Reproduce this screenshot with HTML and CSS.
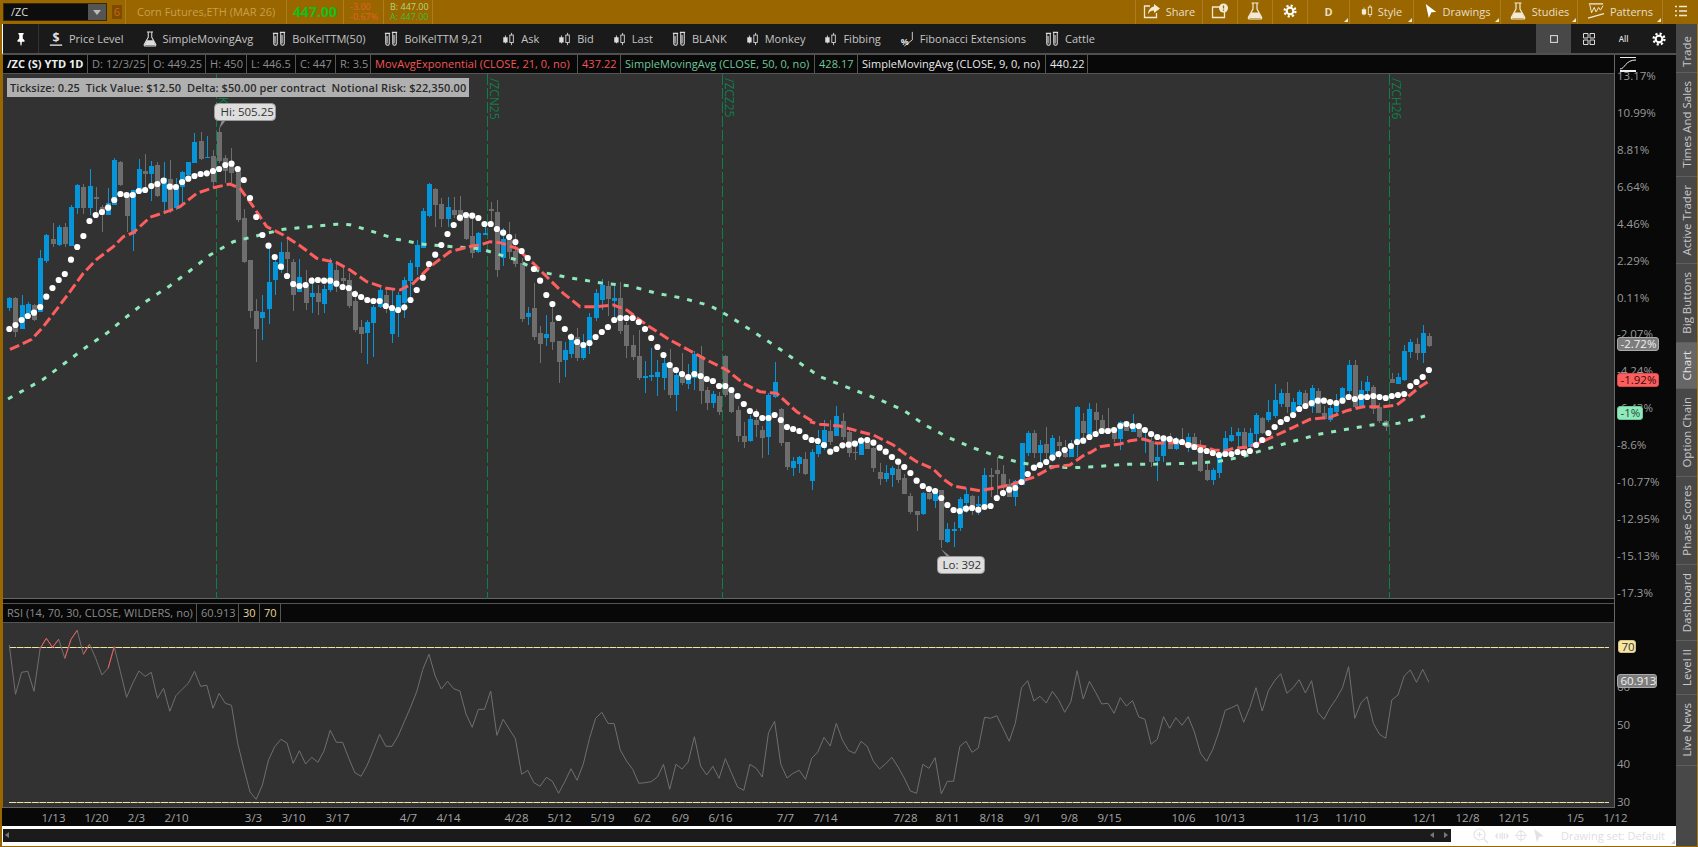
FILE: index.html
```html
<!DOCTYPE html>
<html lang="en">
<head>
<meta charset="utf-8">
<title>/ZC Chart</title>
<link rel="stylesheet" href="styles.css">
</head>
<body>
<svg class="sprite" aria-hidden="true">
  <symbol id="i-pin" viewBox="0 0 16 16"><path d="M5 1h6v1.500l-1 .5v4.500l2 2V11H9l-.5 4.500h-1L7 11H4V9.500l2-2V3l-1-.5z" fill="currentColor"/></symbol>
  <symbol id="i-dollar" viewBox="0 0 16 18"><text x="8" y="12" text-anchor="middle" class="ic-text">$</text><path d="M1 16h14" stroke="currentColor" stroke-width="1.600"/></symbol>
  <symbol id="i-flask" viewBox="0 0 16 18"><path d="M4.500 1h7M6 1v6L1.500 15c-.5 1 0 2 1 2h11c1 0 1.500-1 1-2L10 7V1" fill="none" stroke="currentColor" stroke-width="1.200"/><path d="M4.300 10.500h7.400L14.500 16H1.500z" fill="currentColor"/></symbol>
  <symbol id="i-tubes" viewBox="0 0 16 18"><path d="M1 2.500h6M9 1.500h6" stroke="currentColor" stroke-width="1.400"/><path d="M2 3v11c0 3 4 3 4 0V3M10 2v12c0 3 4 3 4 0V2" fill="none" stroke="currentColor" stroke-width="1.200"/><path d="M3.500 5.500v8.500M11.500 4.500v9.500" stroke="currentColor" stroke-width="1.200"/></symbol>
  <symbol id="i-candles" viewBox="0 0 14 16"><path d="M3.500 4v9M10.500 1v14" stroke="currentColor"/><rect x="1" y="6" width="5" height="6" fill="currentColor"/><rect x="8.500" y="3.500" width="4" height="8.500" fill="#1a1a1a" stroke="currentColor"/></symbol>
  <symbol id="i-candles-top" viewBox="0 0 14 16"><path d="M3.500 4v9M10.500 1v14" stroke="currentColor"/><rect x="1" y="6" width="5" height="6" fill="currentColor"/><rect x="8.500" y="3.500" width="4" height="8.500" fill="#996600" stroke="currentColor"/></symbol>
  <symbol id="i-fib" viewBox="0 0 14 18"><text x="0" y="16" class="ic-pct">%</text><path d="M13 1v9L4 17" fill="none" stroke="currentColor"/></symbol>
  <symbol id="i-gear" viewBox="0 0 16 16"><circle cx="8" cy="8" r="3.800" fill="none" stroke="currentColor" stroke-width="2.400"/><circle cx="8" cy="8" r="6.200" fill="none" stroke="currentColor" stroke-width="2.600" stroke-dasharray="2.430 2.430"/></symbol>
  <symbol id="i-share" viewBox="0 0 18 16"><path d="M7 3H1.500v11.500h12V10" fill="none" stroke="currentColor" stroke-width="1.300"/><path d="M11 1l6 4.500L11 10V7.500C8 7.500 6 9 5 11.500 5 7 8 4 11 3.500z" fill="currentColor"/></symbol>
  <symbol id="i-alert" viewBox="0 0 18 16"><path d="M1 4h9M1.500 4v10.500h12V9" fill="none" stroke="currentColor" stroke-width="1.300"/><circle cx="12.500" cy="5" r="4.500" fill="currentColor"/><path d="M12.500 2.500v3M12.500 6.500v1.200" stroke="#996600" stroke-width="1.300"/></symbol>
  <symbol id="i-cursor" viewBox="0 0 14 16"><path d="M1 0l12 9-5.500 .5 L4.500 16z" fill="currentColor"/></symbol>
  <symbol id="i-patterns" viewBox="0 0 20 18"><path d="M2 1h16" stroke="currentColor" stroke-width="1.500"/><path d="M3 2l2 9 3-6 2 5 3-5 2 3 3-5" fill="none" stroke="currentColor" stroke-width="1.100"/><path d="M1 17L19 12" stroke="currentColor" stroke-width="1.500"/></symbol>
  <symbol id="i-list" viewBox="0 0 12 12"><path d="M0 1.500h2M4 1.500h8M0 6h2M4 6h8M0 10.500h2M4 10.500h8" stroke="currentColor" stroke-width="1.500"/></symbol>
  <symbol id="i-square" viewBox="0 0 10 10"><rect x=".75" y=".75" width="8.500" height="8.500" fill="none" stroke="currentColor" stroke-width="1.300"/></symbol>
  <symbol id="i-grid" viewBox="0 0 12 12"><path d="M.5 .5h4.500v4.500H.5zM7 .5h4.500v4.500H7zM.5 7h4.500v4.500H.5zM7 7h4.500v4.500H7z" fill="none" stroke="currentColor"/></symbol>
  <symbol id="i-zoom" viewBox="0 0 16 16"><circle cx="6.500" cy="6.500" r="5.500" fill="none" stroke="currentColor" stroke-width="1.200"/><path d="M6.500 4v5M4 6.500h5M10.500 10.500L15 15" stroke="currentColor" stroke-width="1.200"/></symbol>
  <symbol id="i-pan" viewBox="0 0 16 10"><path d="M0 5l3-4v8zM16 5l-3-4v8zM5 2h1.500v6H5zM7.500 1H9v8H7.500zM10 2h1.500v6H10z" fill="currentColor"/></symbol>
  <symbol id="i-cross" viewBox="0 0 14 14"><circle cx="7" cy="7" r="5" fill="none" stroke="currentColor" stroke-width="1.200"/><path d="M7 0v14M0 7h14" stroke="currentColor" stroke-width="1.200"/></symbol>
</svg>

<div class="app">
  <header class="topbar">
    <div class="symbol-box"><span class="symbol-text">/ZC</span><span class="symbol-drop"></span></div>
    <div class="link-badge">6</div>
    <div class="quote q-name">Corn Futures,ETH (MAR 26)</div>
    <div class="quote q-last">447.00</div>
    <div class="quote q-chg"><span>-3.00</span><span>-0.67%</span></div>
    <div class="quote q-ba"><span>B: 447.00</span><span>A: 447.00</span></div>
    <nav class="topnav">
      <button class="tbtn w-share"><svg class="ic18"><use href="#i-share"/></svg>Share</button>
      <button class="tbtn w-35"><svg class="ic18"><use href="#i-alert"/></svg></button>
      <button class="tbtn w-35"><svg class="ic18 flask"><use href="#i-flask"/></svg></button>
      <button class="tbtn w-35"><svg class="ic14"><use href="#i-gear"/></svg></button>
      <button class="tbtn w-d corner"><b>D</b></button>
      <button class="tbtn w-style corner"><svg class="ic-cdl"><use href="#i-candles-top"/></svg>Style</button>
      <button class="tbtn w-draw corner"><svg class="ic14"><use href="#i-cursor"/></svg>Drawings</button>
      <button class="tbtn w-studies corner"><svg class="ic18 flask"><use href="#i-flask"/></svg>Studies</button>
      <button class="tbtn w-patterns corner"><svg class="ic18"><use href="#i-patterns"/></svg>Patterns</button>
      <button class="tbtn w-list"><svg class="ic12"><use href="#i-list"/></svg></button>
    </nav>
  </header>

  <div class="main">
    <div class="work">
      <div class="toolbar">
        <div class="pin"><svg class="ic14"><use href="#i-pin"/></svg></div>
        <div class="favs">
          <span class="fav"><svg class="fi"><use href="#i-dollar"/></svg>Price Level</span>
          <span class="fav"><svg class="fi"><use href="#i-flask"/></svg>SimpleMovingAvg</span>
          <span class="fav"><svg class="fi"><use href="#i-tubes"/></svg>BolKelTTM(50)</span>
          <span class="fav"><svg class="fi"><use href="#i-tubes"/></svg>BolKelTTM 9,21</span>
          <span class="fav"><svg class="fc"><use href="#i-candles"/></svg>Ask</span>
          <span class="fav"><svg class="fc"><use href="#i-candles"/></svg>Bid</span>
          <span class="fav"><svg class="fc"><use href="#i-candles"/></svg>Last</span>
          <span class="fav"><svg class="fi"><use href="#i-tubes"/></svg>BLANK</span>
          <span class="fav"><svg class="fc"><use href="#i-candles"/></svg>Monkey</span>
          <span class="fav"><svg class="fc"><use href="#i-candles"/></svg>Fibbing</span>
          <span class="fav"><svg class="fi"><use href="#i-fib"/></svg>Fibonacci Extensions</span>
          <span class="fav"><svg class="fi"><use href="#i-tubes"/></svg>Cattle</span>
        </div>
        <div class="views">
          <button class="vbtn active"><svg class="ic10"><use href="#i-square"/></svg></button>
          <button class="vbtn"><svg class="ic12b"><use href="#i-grid"/></svg></button>
          <button class="vbtn all">All</button>
          <button class="vbtn"><svg class="ic14"><use href="#i-gear"/></svg></button>
        </div>
      </div>

      <div class="panes">
        <div class="plots">
          <div class="infobar price-info">
            <span class="cell c-title">/ZC (S) YTD 1D</span>
            <span class="cell">D: 12/3/25</span>
            <span class="cell">O: 449.25</span>
            <span class="cell">H: 450</span>
            <span class="cell">L: 446.5</span>
            <span class="cell">C: 447</span>
            <span class="cell">R: 3.5</span>
            <span class="cell c-red">MovAvgExponential (CLOSE, 21, 0, no)</span>
            <span class="cell c-red">437.22</span>
            <span class="cell c-green">SimpleMovingAvg (CLOSE, 50, 0, no)</span>
            <span class="cell c-green">428.17</span>
            <span class="cell c-white">SimpleMovingAvg (CLOSE, 9, 0, no)</span>
            <span class="cell c-white">440.22</span>
          </div>
          <div class="price-plot">
            <svg id="priceChart" class="price-svg" viewBox="3 74 1612 525"></svg>
            <div class="ticksize">Ticksize: 0.25  Tick Value: $12.50  Delta: $50.00 per contract  Notional Risk: $22,350.00</div>
          </div>
          <div class="infobar rsi-head">
            <span class="cell">RSI (14, 70, 30, CLOSE, WILDERS, no)</span>
            <span class="cell">60.913</span>
            <span class="cell c-yellow">30</span>
            <span class="cell c-yellow">70</span>
          </div>
          <div class="rsi-plot">
            <svg id="rsiChart" class="rsi-svg" viewBox="3 623 1612 185"></svg>
          </div>
        </div>
        <svg id="axis" class="axis-svg" viewBox="1615 55 61 753"></svg>
      </div>

      <svg id="dates" class="dates-svg" viewBox="3 808 1673 18"></svg>

      <div class="statusbar">
        <div class="scroll"><i class="arr arr-l"></i><i class="arr arr-l arr-m"></i><i class="arr arr-r"></i></div>
        <div class="tools">
          <svg class="st16"><use href="#i-zoom"/></svg>
          <svg class="st14"><use href="#i-pan"/></svg>
          <svg class="st12"><use href="#i-cross"/></svg>
          <svg class="st12"><use href="#i-cursor"/></svg>
          <span class="drawset">Drawing set: Default</span>
        </div>
      </div>
    </div>

    <aside class="tabs">
      <span class="tab tab-first"><span>Trade</span></span>
      <span class="tab"><span>Times And Sales</span></span>
      <span class="tab"><span>Active Trader</span></span>
      <span class="tab"><span>Big Buttons</span></span>
      <span class="tab on"><span>Chart</span></span>
      <span class="tab"><span>Option Chain</span></span>
      <span class="tab"><span>Phase Scores</span></span>
      <span class="tab"><span>Dashboard</span></span>
      <span class="tab"><span>Level II</span></span>
      <span class="tab"><span>Live News</span></span>
      <span class="tab rest"></span>
    </aside>
  </div>
</div>
<script src="chart.js"></script>
</body>
</html>
```

FILE: styles.css
```css
* { box-sizing: border-box; }
html, body { margin: 0; padding: 0; height: 100%; }
body {
  width: 1698px; height: 847px; overflow: hidden;
  background: #996600; color: #ccc;
  font: 11px "Open Sans", "Liberation Sans", sans-serif;
}
.sprite { display: none; }
button { font: inherit; color: inherit; background: none; border: 0; padding: 0; }
.ic-text { font: bold 14px "Open Sans", sans-serif; fill: currentColor; }
.ic-pct { font: bold 10px "Open Sans", sans-serif; fill: currentColor; }

.app { display: flex; flex-direction: column; height: 846px; }

/* top bar */
.topbar { display: flex; align-items: stretch; height: 24px; padding-left: 3px; background: #996600; flex: none; }
.symbol-box { width: 104px; height: 18px; margin-top: 3px; background: #0d0d0d; border: 1px solid #3a2a00; display: flex; justify-content: space-between; }
.symbol-text { color: #ddd; font-size: 11px; line-height: 16px; padding-left: 7px; }
.symbol-drop { width: 18px; background: #555; position: relative; }
.symbol-drop::after { content: ""; position: absolute; left: 5px; top: 6px; border: 4px solid transparent; border-top: 5px solid #bbb; border-bottom: 0; }
.link-badge { width: 10px; height: 14px; margin: 5px 0 0 5px; background: #7f4a00; color: #c06a10; font-size: 11px; line-height: 14px; text-align: center; }
.quote { display: flex; flex-direction: column; justify-content: center; align-items: flex-start; border-left: 1px solid #ab7d22; padding-left: 7px; line-height: 10px; font-size: 9px; }
.q-name { margin-left: 3px; width: 161px; padding-left: 11px; color: #c9a04a; font-size: 11px; }
.q-last { width: 57px; color: #0fc01a; font-size: 14px; font-weight: 700; padding-left: 6px; }
.q-chg { width: 40px; color: #e6602c; padding-left: 6px; }
.q-ba { width: 50px; color: #b6d77a; border-right: 1px solid #ab7d22; padding-left: 6px; }
.q-ba span:last-child { color: #3fbe36; }

.topnav { margin-left: auto; display: flex; }
.tbtn { display: flex; align-items: center; justify-content: center; gap: 5px; padding-bottom: 2px; border-left: 1px solid #ab7d22; color: #eadfc4; font-size: 11px; position: relative; }
.w-share { width: 67px; }
.w-35 { width: 35px; }
.w-d { width: 42px; }
.w-style { width: 64px; }
.w-draw { width: 87px; }
.w-studies { width: 77px; }
.w-patterns { width: 85px; }
.w-list { width: 36px; }
.corner::after { content: ""; position: absolute; right: 1px; bottom: 2px; border: 2px solid transparent; border-right-color: #f3ead4; border-bottom-color: #f3ead4; }
.ic18 { width: 18px; height: 16px; color: #f3ead4; }
.flask { height: 18px; }
.ic14 { width: 14px; height: 14px; color: #fff; }
.ic12 { width: 12px; height: 12px; color: #f3ead4; }
.ic-cdl { width: 12px; height: 14px; color: #f3ead4; }

/* main */
.main { flex: 1; display: flex; min-height: 0; }
.work { flex: 1; min-width: 0; margin-left: 2px; display: flex; flex-direction: column; }

.toolbar { display: flex; height: 31px; background: #1a1a1a; border-bottom: 2px solid #505050; border-left: 1px solid #fff; flex: none; }
.pin { width: 36px; display: flex; align-items: center; justify-content: center; border-right: 1px solid #333; }
.favs { display: flex; align-items: center; gap: 19px; padding-left: 10px; color: #c4c4c4; font-size: 11px; }
.fav { display: flex; align-items: center; gap: 6px; }
.fi { width: 14px; height: 16px; color: #ddd; }
.fc { width: 13px; height: 14px; color: #ddd; }
.views { margin-left: auto; display: flex; }
.vbtn { width: 35px; display: flex; align-items: center; justify-content: center; color: #ddd; }
.vbtn.active { background: #484848; }
.vbtn.all { font-size: 8px; font-weight: 600; }
.ic10 { width: 8px; height: 8px; }
.ic12b { width: 12px; height: 12px; }

.panes { display: flex; flex: none; height: 753px; }
.plots { width: 1612px; margin-left: 1px; display: flex; flex-direction: column; border-right: 1px solid #666; background: #080808; flex: none; }
.infobar { display: flex; height: 19px; background: #080808; border-bottom: 1px solid #555; flex: none; font-size: 11px; line-height: 18px; letter-spacing: .05px; }
.cell { padding: 0 4px; border-right: 1px solid #555; color: #8c8c8c; white-space: nowrap; flex: none; }
.c-title { color: #f0f0f0; font-weight: 700; padding-left: 4px; }
.c-red { color: #f05656; }
.c-green { color: #6fc69b; }
.c-white { color: #e8e8e8; }
.c-yellow { color: #e5d79c; }

.price-info .cell:nth-child(1) { width: 85px; }
.price-info .cell:nth-child(2) { width: 61px; }
.price-info .cell:nth-child(3) { width: 57px; }
.price-info .cell:nth-child(4) { width: 41px; }
.price-info .cell:nth-child(5) { width: 49px; }
.price-info .cell:nth-child(6) { width: 40px; }
.price-info .cell:nth-child(7) { width: 35px; }
.price-info .cell:nth-child(8) { width: 207px; }
.price-info .cell:nth-child(9) { width: 43px; }
.price-info .cell:nth-child(10) { width: 194px; }
.price-info .cell:nth-child(11) { width: 43px; }
.price-info .cell:nth-child(12) { width: 188px; }
.price-info .cell:nth-child(13) { width: 42px; }
.rsi-head .cell:nth-child(1) { width: 194px; }
.rsi-head .cell:nth-child(2) { width: 42px; }
.rsi-head .cell:nth-child(3) { width: 21px; }
.rsi-head .cell:nth-child(4) { width: 21px; }

.price-plot { position: relative; height: 525px; background: #323232; flex: none; border-bottom: 1px solid #666; }
.price-svg { display: block; width: 1612px; height: 525px; }
.ticksize { position: absolute; left: 4px; top: 4px; height: 19px; padding: 0 3px; background: #b0b0b0; color: #2a2a2a; font-weight: 600; font-size: 11px; line-height: 19px; letter-spacing: .08px; white-space: pre; }
.rsi-head { margin-top: 4px; height: 20px; border-top: 1px solid #555; }
.rsi-plot { height: 185px; flex: none; background: #323232; border-bottom: 1px solid #666; }
.rsi-svg { display: block; width: 1612px; height: 185px; }
.axis-svg { display: block; width: 61px; height: 753px; background: #080808; flex: none; overflow: visible; }
.dates-svg { display: block; width: 1674px; height: 18px; background: #080808; flex: none; }

.candle-g { fill: #6e6e6e; }
.candle-b { fill: #0595d8; }
.ema { fill: none; stroke: #ff5e5e; stroke-width: 3; stroke-dasharray: 10 4; }
.sma50 { fill: none; stroke: #8fe9ba; stroke-width: 3; stroke-dasharray: 5 8; }
.dot { fill: #fff; }
.exp-line { stroke: #0e7f49; stroke-width: 1; stroke-dasharray: 11 3; }
.exp-text { fill: #0e7f49; font: 12px "Open Sans", sans-serif; }
.hl-box { fill: #dedede; stroke: #9a9a9a; }
.hl-tip { fill: #8a8a8a; }
.hl-text { fill: #333; font: 11.500px "Open Sans", sans-serif; }
.rsi-line { fill: none; stroke: #6f6f6f; stroke-width: 1; }
.rsi-hot { fill: none; stroke: #f05b5b; stroke-width: 1; }
.rsi-level { stroke: #f3e3a0; stroke-width: 1; stroke-dasharray: 7 .6; }
.ax { fill: #9a9a9a; font: 11.500px "Open Sans", sans-serif; }
.pill-text { font: 11.500px "Open Sans", sans-serif; }
.date { fill: #a2a2a2; font: 11.500px "Open Sans", sans-serif; text-anchor: middle; }
.scale-ic { fill: none; stroke: #eee; stroke-width: 1; }
.scale-bar { fill: #eee; }

/* status bar */
.statusbar { display: flex; height: 20px; background: #fff; flex: none; padding-top: 3px; position: relative; }
.statusbar::after { content: ""; position: absolute; right: 1px; bottom: 2px; border: 2px solid transparent; border-right-color: #ccc; border-bottom-color: #ccc; }
.scroll { width: 1448px; height: 13px; margin-left: 1px; background: #1b1b1b; position: relative; flex: none; }
.arr { position: absolute; top: 3px; border: 3.500px solid transparent; }
.arr-l { left: 2px; border-left: 0; border-right: 4px solid #777; }
.arr-m { left: 1427px; }
.arr-r { left: 1441px; border-right: 0; border-left: 4px solid #777; }
.tools { display: flex; align-items: center; gap: 6px; padding-left: 22px; color: #e2e2e2; height: 15px; margin-top: -1px; }
.st16 { width: 16px; height: 16px; }
.st14 { width: 14px; height: 10px; }
.st12 { width: 12px; height: 13px; }
.drawset { margin-left: 10px; color: #e0e0e0; font-size: 11px; white-space: nowrap; }

/* right tabs */
.tabs { width: 22px; display: flex; flex-direction: column; background: #080808; flex: none; border-right: 1px solid #a67a1a; }
.tab { display: flex; align-items: center; justify-content: center; padding: 8px 0; background: #484848; color: #c8c8c8; border-bottom: 1px solid #5e5e5e; font-size: 11.500px; flex: none; }
.tab-first { padding: 12px 0 5px; }
.tab span { writing-mode: vertical-rl; transform: rotate(180deg); white-space: nowrap; }
.tab.on { background: #666; color: #e4e4e4; }
.tab.rest { flex: 1; border-bottom: 0; }
```

FILE: chart.js
```js
(function () {
  var NS = { x0: 9.3, dx: 6.172 };
  function bx(i) { return NS.x0 + NS.dx * i; }

  /* Candles: [blue?, bodyTop, bodyBottom, wickTop, wickBottom], measured in 3x crops; the number is the crop's top edge. */
  var segs = [
    [100, [[1,594,624,590,632],[0,594,696,590,710],[1,615,687,586,687],[1,612,640,605,650],[0,615,660,612,662],[1,474,636,450,636],[1,405,484,403,490],[0,417,432,368,440],[1,380,436,374,438],[0,380,433,370,440],
      [1,321,438,314,438],[1,255,323,252,343],[0,261,323,252,343],[1,258,324,208,345],[0,292,296,262,345],[0,320,345,316,395],[1,310,345,265,345],[1,180,314,175,315],[0,186,255,183,258],[0,285,348,280,395],
      [1,270,403,270,452],[1,208,270,178,270],[0,213,221,163,280],[1,198,221,183,302],[0,195,288,185,290],[1,235,305,185,340],[0,238,328,180,340],[1,255,325,235,330],[1,216,260,212,312],[1,186,225,186,225],
      [1,125,188,98,188],[0,123,178,96,180],[1,170,173,108,175],[0,168,245,150,262],[0,95,183,85,190],[0,175,213,165,250],[0,185,220,145,250],[0,213,360,200,365],[0,354,485,327,490],[0,480,632,480,653],
      [0,633,687,598,785],[1,636,654,585,720],[1,546,627,445,672],[1,487,540,465,585],[1,457,510,425,520],[0,456,477,410,520],[0,487,585,478,632],[1,531,575,477,575],[0,556,610,510,630],[1,580,590,530,640],
      [0,580,606,555,645],[1,568,611,555,640],[1,488,569,475,575],[0,510,547,490,575],[0,534,543,505,570],[0,540,618,520,625],[0,603,690,570,695],[0,682,702,660,760],[1,666,699,660,792],[1,621,669,615,770],
      [1,570,620,565,625],[0,586,625,560,640],[1,628,702,565,730],[1,585,625,575,710],[1,540,608,530,655],[1,489,543,480,590],[1,434,502,420,525],[1,333,443,325,445],[1,252,348,250,350],[0,267,315,265,380],
      [0,312,357,295,380],[1,322,357,292,382],[0,330,345,290,355],[0,330,362,288,365],[0,352,417,340,420],[0,408,458,345,475],[1,400,457,395,460],[1,400,404,370,406],[0,328,332,305,375],[0,337,510,300,530]]],
    [190, [[1,148,203,115,228],[0,150,186,97,208],[0,183,222,133,230],[0,220,387,203,395],[1,369,381,350,405],[0,354,440,280,450],[0,430,462,408,518],[1,432,444,375,468],[0,396,456,350,480],[0,453,516,453,580],
      [1,480,510,457,560],[1,445,492,428,505],[0,442,503,415,513],[1,470,504,432,510],[1,381,458,370,492],[1,309,384,297,392],[1,285,330,267,360],[0,288,327,273,378],[1,323,333,285,380],[0,324,423,275,432],
      [0,405,468,395,503],[0,465,501,435,510],[0,498,564,420,570],[1,558,564,513,608],[1,555,561,473,572],[1,546,562,510,618],[1,519,564,505,600],[0,530,614,477,623],[1,555,615,530,662],[0,545,579,488,585],
      [1,565,582,522,598],[1,491,563,482,600],[0,498,603,468,642],[0,600,639,590,660],[1,612,640,603,655],[0,618,666,605,675],[0,498,615,495,620],[0,600,667,590,670],[0,660,738,648,756],[0,738,756,695,773],
      [1,686,753,675,755],[0,690,705,657,740],[0,720,744,708,804],[1,615,741,610,795],[1,576,620,516,625],[0,657,760,655,768],[0,756,830,755,840],[1,813,834,800,858],[1,801,822,797,850],[0,807,852,785,855],
      [1,786,873,777,900],[1,765,792,720,800]]],
    [400, [[1,90,145,60,150],[0,93,127,60,135],[1,48,107,18,108],[0,62,110,40,120],[0,95,158,85,170],[0,156,160,130,180],[1,128,165,110,165],[0,130,147,115,147],[0,145,203,140,215],[0,216,237,190,255],
      [1,218,237,195,247],[1,205,225,197,260],[0,207,240,190,250],[0,234,282,222,282],[0,288,337,280,342],[0,333,344,333,392],[1,279,343,275,345],[0,280,297,262,300],[1,280,303,265,323],[0,270,420,270,445],
      [1,388,427,370,428],[1,388,393,365,440],[1,297,384,290,392],[1,282,310,265,340],[0,288,320,285,345],[1,313,318,288,345],[1,225,320,205,322],[0,226,231,203,292],[0,210,222,170,292],[0,222,254,195,290],
      [0,252,290,238,292],[1,243,291,240,318],[1,130,255,128,255],[1,100,158,93,168],[0,98,158,90,175],[1,135,160,120,190],[0,132,160,82,185],[1,114,165,105,185],[0,126,138,108,178],[0,160,170,120,175],
      [1,145,172,120,172],[1,22,130,18,170],[0,63,100,40,120],[1,27,102,10,102],[0,36,60,10,100],[0,60,100,45,100],[0,85,100,25,100],[0,95,117,85,125],[1,65,118,62,150],[0,80,92,75,92],
      [1,82,96,42,96],[0,85,112,70,115],[1,117,123,95,160],[0,123,186,105,200],[1,170,183,125,242],[1,115,167,105,185],[0,115,148,100,148],[1,118,146,110,150],[0,125,135,85,135],[1,112,142,100,155],
      [0,110,150,100,150]]],
    [320, [[0,395,452,360,455],[0,450,480,430,482],[1,450,480,445,495],[1,412,458,400,473],[1,355,405,333,412],[1,345,364,322,365],[1,336,348,325,380],[0,336,385,325,395],[1,340,380,325,390],[1,285,342,278,370],
      [0,293,340,290,342],[1,277,300,240,305],[1,240,288,193,295],[1,220,252,208,260],[0,218,262,186,278],[1,246,275,235,280],[1,216,255,210,275],[0,218,252,210,255],[1,205,260,195,278],[0,212,278,205,280],
      [0,279,298,258,300],[1,265,300,255,305],[1,245,275,222,280],[1,205,250,200,252],[1,135,213,120,240],[0,135,262,120,265],[1,210,258,183,260],[1,186,213,168,240],[0,201,266,195,282],[0,260,302,250,310],
      [0,303,320,300,333],[0,177,188,158,188],[1,171,192,160,192],[1,93,180,75,182],[1,66,95,58,113],[0,72,98,55,120],[1,39,98,15,128],[0,48,78,40,80]]]
  ];

  var dots = []
    .concat([687,675,660,648,638,621,590,564,540,522,479,441,408,363,345,336,323,300,282,285,285,273,270,258,252,242,260,261,246,236,228,222,220,213,207,195,191,207,240,294,351,405,437,471,500,528,552,558,555,542,540,542,542,551,561,564,582,591,600,603,603,618,624,630,622,600,570,533,492,464,435,402,375,353,345,347,354,372,372,387].map(function (v) { return 100 + v / 3; }))
    .concat([128,141,156,183,204,237,272,315,342,384,417,441,456,465,459,441,426,411,390,384,384,384,396,417,444,471,495,525,540,552,561,552,558,567,573,588,588,600,618,642,663,672,684,684,675,690,711,717,723,741,750,753].map(function (v) { return 190 + v / 3; }))
    .concat([135,155,147,136,134,131,122,120,128,143,155,171,185,201,219,242,258,267,273,294,315,330,333,326,324,329,321,318,294,279,269,264,246,222,203,195,186,173,162,150,138,126,122,111,102,93,93,90,78,72,78,78,90,102,111,115,117,123,126,135,141].map(function (v) { return 400 + v / 3; }))
    .concat([390,393,399,405,402,402,396,399,393,375,360,339,321,306,297,285,267,258,249,242,242,246,249,242,231,237,231,231,228,231,234,228,225,222,198,186,171,150].map(function (v) { return 320 + v / 3; }));

  var rsi = []
    .concat([165,313,247,244,304,175,145,172,148,205,148,121,193,163,205,255,235,170,245,322,280,243,259,247,325,295,364,317,298,280,244,289,286,355,310,340,346,460,535,606,628,585,510,470,448,459,520,482,522,502,517,482,421,457,457,505,548,559,525,480,433,469,469,438,395,352,305,238,193,258,297,274,296,303,372,412,358,358,303,436].map(function (v) { return 590 + v / 3; }))
    .concat([268,297,326,433,421,458,469,442,454,490,455,416,451,402,325,265,247,280,281,360,393,418,460,458,455,441,403,478,403,417,396,320,408,435,409,445,386,428,471,481,403,415,441,308,274,403,444,430,421,448,385,366,322,348,280,331,362,370,334,349,394,417,401,382,411,444,483,490,403,415,383].map(function (v) { return 630 + v / 3; }))
    .concat([492,454,454,349,334,367,354,262,265,257,295,334,280,173,152,213,199,219,184,209,247,215,122,207,154,187,222,220,250,203,228,212,261,268,343,328,260,295,263,286,260,305,370,394,358,305,241,233,224,277,232,173,243,182,152,131,190,173,149,189,152,247,268,233,206,173,110,265,218,200,280,313].map(function (v) { return 630 + v / 3; }))
    .concat([445,330,315,258,240,277,238,277].map(function (v) { return 590 + v / 3; }));

  function crop(ox, oy, pts) {
    return pts.map(function (p) { return (ox + p[0] / 3).toFixed(1) + ',' + (oy + p[1] / 3).toFixed(1); });
  }

  var emaPts = [].concat(
    crop(0, 100, [[30,748],[60,735],[95,718],[130,680],[170,628],[210,575],[250,520],[290,478],[340,440],[370,410],[400,398],[450,352],[500,335],[540,320],[590,280],[640,263],[690,252],[720,265],[760,320],[800,380],[850,405],[900,437],[950,475],[1010,488],[1050,510],[1100,545],[1160,565],[1200,570],[1240,550],[1290,500],[1350,455],[1420,437]]),
    crop(480, 190, [[0,165],[30,155],[60,158],[110,175],[160,220],[210,270],[250,310],[300,350],[350,350],[400,345],[440,360],[500,405],[570,450],[630,482],[680,510],[740,540],[790,580],[840,605],[890,610],[950,665],[1005,698]]),
    crop(800, 400, [[30,65],[60,73],[120,78],[180,95],[220,105],[280,135],[320,165],[350,185],[400,207],[430,237],[460,258],[500,265],[540,272],[580,265],[630,255],[700,232],[760,200],[810,195],[860,160]]),
    crop(1090, 320, [[0,398],[30,380],[60,376],[90,372],[120,362],[160,357],[200,370],[240,368],[290,372],[345,380],[370,390],[410,392],[430,385],[470,382],[510,368],[560,345],[610,322],[660,298],[720,292],[770,272],[820,260],[880,260],[920,255],[960,225],[990,200],[1018,183]])
  );

  var smaPts = ['8,399'].concat(
    crop(0, 100, [[130,838],[200,785],[260,740],[320,700],[380,650],[440,603],[510,557],[570,512],[630,465],[700,425],[780,405],[850,388],[930,380],[1010,373],[1050,374],[1110,392],[1190,418],[1270,433],[1360,440]]),
    crop(480, 190, [[0,176],[30,185],[110,210],[180,245],[260,262],[370,280],[450,288],[530,310],[610,325],[690,347],[750,380],[820,425],[885,467],[950,513],[1020,560]]),
    crop(800, 400, [[240,0],[310,30],[370,72],[440,110],[510,140],[580,165],[660,188],[740,200],[820,203]]),
    crop(1090, 320, [[20,440],[100,433],[180,433],[300,430],[380,425],[450,412],[530,387],[610,364],[690,342],[770,328],[845,315],[925,310],[1005,288]])
  );

  /* price pane */
  var h = '';
  var expiries = [[216.5, '/ZCK25'], [487.5, '/ZCN25'], [722.5, '/ZCZ25'], [1389.5, '/ZCH26']];
  expiries.forEach(function (e) {
    h += '<line class="exp-line" x1="' + e[0] + '" x2="' + e[0] + '" y1="74" y2="599"/>';
    h += '<text class="exp-text" transform="translate(' + (e[0] + 2) + ',78) rotate(90)">' + e[1] + '</text>';
  });
  var i = 0;
  segs.forEach(function (s) {
    s[1].forEach(function (c) {
      var x = Math.round(bx(i));
      var cls = c[0] ? 'candle-b' : 'candle-g';
      var o = s[0];
      var wt = o + c[3] / 3, wb = o + c[4] / 3, bt = o + c[1] / 3, bb = o + c[2] / 3;
      h += '<rect class="' + cls + '" x="' + x + '" width="1" y="' + wt.toFixed(1) + '" height="' + (wb - wt).toFixed(1) + '" shape-rendering="crispEdges"/>';
      h += '<rect class="' + cls + '" x="' + (x - 2) + '" width="5" y="' + bt.toFixed(1) + '" height="' + Math.max(1, bb - bt).toFixed(1) + '" shape-rendering="crispEdges"/>';
      i++;
    });
  });
  h += '<polyline class="sma50" points="' + smaPts.join(' ') + '"/>';
  h += '<polyline class="ema" points="' + emaPts.join(' ') + '"/>';
  dots.forEach(function (y, n) {
    h += '<circle class="dot" cx="' + bx(n).toFixed(1) + '" cy="' + y.toFixed(1) + '" r="3.100"/>';
  });
  h += '<path class="hl-tip" d="M219 129L222 120H226z"/><rect class="hl-box" x="214.500" y="103.500" width="61" height="17" rx="4"/><text class="hl-text" x="220.500" y="116">Hi: 505.25</text>';
  h += '<path class="hl-tip" d="M941 549L947 557H951z"/><rect class="hl-box" x="937.500" y="556.500" width="47" height="17" rx="4"/><text class="hl-text" x="942.500" y="569">Lo: 392</text>';
  document.getElementById('priceChart').innerHTML = h;

  /* RSI pane */
  var r = '<line class="rsi-level" x1="9" x2="1609" y1="647.500" y2="647.500"/><line class="rsi-level" x1="9" x2="1609" y1="802.500" y2="802.500"/>';
  r += '<polyline class="rsi-line" points="' + rsi.map(function (y, n) { return bx(n).toFixed(1) + ',' + y.toFixed(1); }).join(' ') + '"/>';
  for (var n = 1; n < rsi.length; n++) {
    if (rsi[n] < 648) {
      r += '<line class="rsi-hot" x1="' + bx(n - 1).toFixed(1) + '" y1="' + rsi[n - 1].toFixed(1) + '" x2="' + bx(n).toFixed(1) + '" y2="' + rsi[n].toFixed(1) + '"/>';
    }
  }
  document.getElementById('rsiChart').innerHTML = r;

  /* axis */
  var a = '';
  [['13.17%',76],['10.99%',113],['8.81%',150],['6.64%',187],['4.46%',224],['2.29%',261],['0.11%',298],['-2.07%',334],['-4.24%',371],['-6.43%',408],['-8.6%',445],['-10.77%',482],['-12.95%',519],['-15.13%',556],['-17.3%',593],['50',725],['40',764],['30',802],['60',687]].forEach(function (t) {
    a += '<text class="ax" x="1617" y="' + (t[1] + 4) + '">' + t[0] + '</text>';
  });
  a += '<rect class="scale-bar" x="1620" y="57" width="16" height="1"/><path class="scale-ic" d="M1620 69c5 0 5-9 16-9"/><rect class="scale-bar" x="1620" y="70" width="16" height="2"/>';
  function pill(x, y, w, ht, fill, stroke, color, txt) {
    a += '<rect x="' + x + '" y="' + y + '" width="' + w + '" height="' + ht + '" rx="2.500" fill="' + fill + '" stroke="' + stroke + '"/>';
    a += '<text class="pill-text" x="' + (x + 3) + '" y="' + (y + 10.5) + '" fill="' + color + '">' + txt + '</text>';
  }
  pill(1617.5, 337.5, 41, 13, '#7d7d7d', '#aaa', '#f0f0f0', '-2.72%');
  pill(1617.5, 373.5, 41, 13, '#ff5e5e', '#d84a4a', '#3a0c0c', '-1.92%');
  pill(1617.5, 406.5, 25, 13, '#8fe9ba', '#70c898', '#1f4a34', '-1%');
  pill(1618.5, 640.5, 17, 12, '#f6e6a2', '#d5c27c', '#333', '70');
  pill(1617.5, 674.5, 39, 13, '#7d7d7d', '#aaa', '#f0f0f0', '60.913');
  document.getElementById('axis').innerHTML = a;

  /* dates */
  var d = '';
  [['1/13',54],['1/20',97],['2/3',137],['2/10',177],['3/3',254],['3/10',294],['3/17',338],['4/7',409],['4/14',449],['4/28',517],['5/12',560],['5/19',603],['6/2',643],['6/9',681],['6/16',721],['7/7',786],['7/14',826],['7/28',906],['8/11',948],['8/18',992],['9/1',1033],['9/8',1070],['9/15',1110],['10/6',1184],['10/13',1230],['11/3',1307],['11/10',1351],['12/1',1425],['12/8',1468],['12/15',1514],['1/5',1576],['1/12',1616]].forEach(function (t) {
    d += '<text class="date" x="' + t[1] + '" y="822">' + t[0] + '</text>';
  });
  document.getElementById('dates').innerHTML = d;
})();
```
